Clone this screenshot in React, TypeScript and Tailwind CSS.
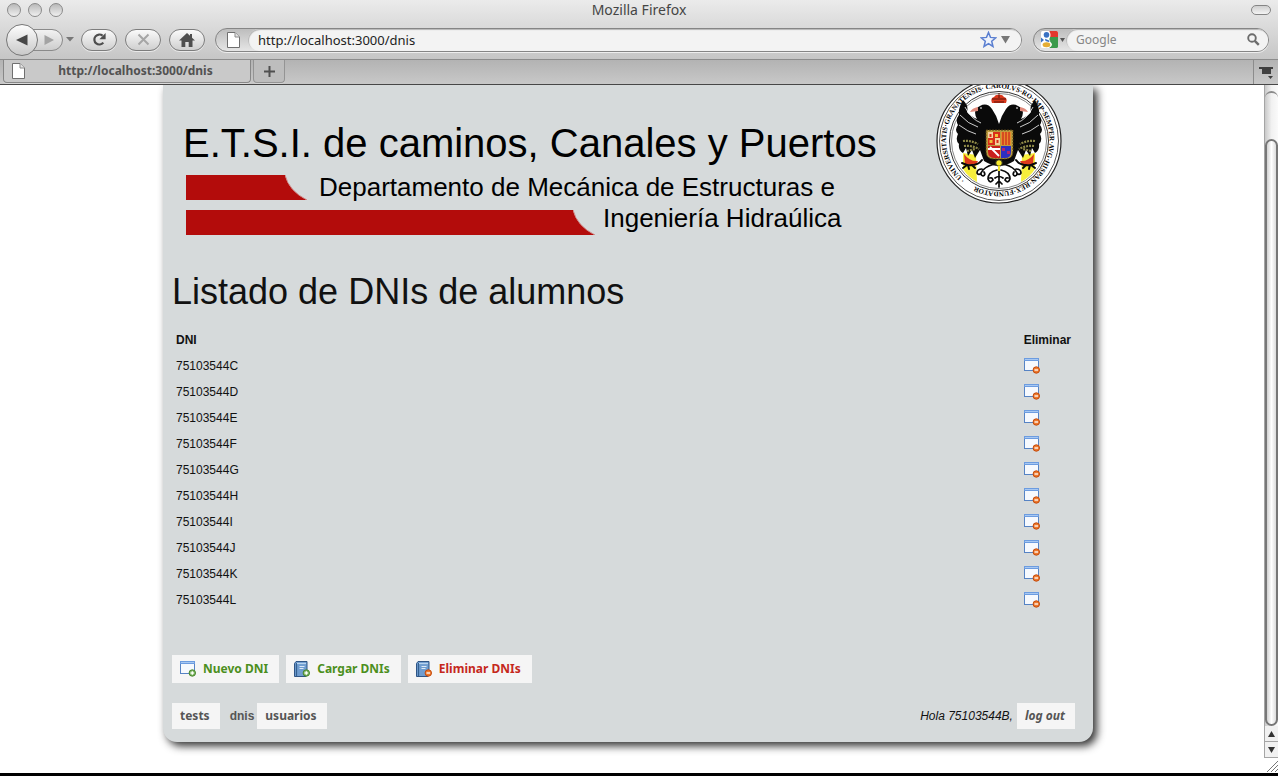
import type { ReactNode } from "react";

const DNIS = [
  "75103544C",
  "75103544D",
  "75103544E",
  "75103544F",
  "75103544G",
  "75103544H",
  "75103544I",
  "75103544J",
  "75103544K",
  "75103544L",
];

const UI_FONT = "font-['Noto_Sans','Open_Sans',sans-serif]";

function PageIcon() {
  return (
    <svg width="13" height="16" viewBox="0 0 13 16" className="shrink-0" aria-hidden="true">
      <path d="M.5.5h7.5l4.5 4.5v10.5H.5z" fill="#fff" stroke="#6f6f6f" />
      <path d="M8 .5V5h4.5" fill="#e4e4e4" stroke="#8b8b8b" />
    </svg>
  );
}

function ToolButton({ label, children }: { label: string; children: ReactNode }) {
  return (
    <button
      type="button"
      aria-label={label}
      className="flex h-[22px] w-9 items-center justify-center rounded-full border border-[#7d7d7d] bg-linear-to-b from-[#fafafa] to-[#cfcfcf] shadow-[0_1px_0_#e9e9e9]"
    >
      {children}
    </button>
  );
}

function TitleBar() {
  const light =
    "size-3.5 rounded-full border border-[#8a8a8a] bg-linear-to-b from-[#b9b9b9] to-[#f0f0f0]";
  return (
    <div className="grid h-5 grid-cols-[1fr_auto_1fr] items-center px-[7px]">
      <div className="flex gap-[7px]">
        <button type="button" aria-label="Cerrar" className={light} />
        <button type="button" aria-label="Minimizar" className={light} />
        <button type="button" aria-label="Ampliar" className={light} />
      </div>
      <h1 className="text-sm leading-5 text-[#454545]">Mozilla Firefox</h1>
      <button
        type="button"
        aria-label="Barra de herramientas"
        className="h-2.5 w-5 justify-self-end rounded-full border border-[#858585] bg-linear-to-b from-[#cfcfcf] to-[#f4f4f4]"
      />
    </div>
  );
}

function GoogleMark() {
  return (
    <svg width="17" height="17" viewBox="0 0 17 17" aria-hidden="true">
      <rect width="17" height="17" rx="1.5" fill="#fff" />
      <path d="M8.500 0H15.500q1.500 0 1.500 1.500V6H8.500z" fill="#e2382c" />
      <path d="M8.500 6H17v9.500q0 1.500-1.500 1.500H8.500z" fill="#3a9a4a" />
      <path d="M0 6.500l3 2.500-3 2.500z" fill="#3a72c4" />
      <circle cx="5.500" cy="4" r="4" fill="#fff" />
      <path d="M5 7l4.500 3L8 12 4 10z" fill="#fff" />
      <ellipse cx="5.700" cy="13.500" rx="5.200" ry="3.600" fill="#fff" />
      <ellipse cx="5.500" cy="3.800" rx="2.800" ry="2.900" fill="#3a72c4" />
      <path d="M4 7.800l4.200 1.600q.6 1-.4 1.700L4.500 10z" fill="#3a72c4" />
      <ellipse cx="5.500" cy="13.700" rx="3.900" ry="2.500" fill="#e5ad34" />
    </svg>
  );
}

function NavBar() {
  return (
    <div className="flex h-[39px] items-center pr-[9px] pl-1.5">
      <div className="flex items-center">
        <button
          type="button"
          aria-label="Atrás"
          className="z-10 flex size-8 items-center justify-center rounded-full border border-[#777] bg-linear-to-b from-[#fdfdfd] to-[#c9c9c9]"
        >
          <svg width="12" height="12" viewBox="0 0 12 12" aria-hidden="true">
            <path d="M0 6L11.500.5v11z" fill="#474747" />
          </svg>
        </button>
        <button
          type="button"
          aria-label="Adelante"
          className="-ml-2 flex h-[22px] w-[33px] items-center justify-end rounded-r-full border border-[#8a8a8a] bg-linear-to-b from-[#f2f2f2] to-[#cdcdcd] pr-2"
        >
          <svg width="10" height="10" viewBox="0 0 10 10" aria-hidden="true">
            <path d="M10 5L.5 0v10z" fill="#a3a3a3" />
          </svg>
        </button>
        <button type="button" aria-label="Historial" className="ml-[3px]">
          <svg width="8" height="5" viewBox="0 0 8 5" aria-hidden="true">
            <path d="M0 0h8L4 4.500z" fill="#777" />
          </svg>
        </button>
      </div>
      <div className="ml-[7px] flex gap-2">
        <ToolButton label="Recargar">
          <svg width="15" height="15" viewBox="0 0 15 15" aria-hidden="true">
            <path d="M11.300 10.600A5 5 0 1 1 10.600 3.700" fill="none" stroke="#4e4e4e" strokeWidth="2.200" />
            <path d="M13.600 1v6.200H7.400z" fill="#4e4e4e" />
          </svg>
        </ToolButton>
        <ToolButton label="Detener">
          <svg width="13" height="13" viewBox="0 0 13 13" aria-hidden="true">
            <path d="M1.500 1.500l10 10M11.500 1.500l-10 10" stroke="#a6a6a6" strokeWidth="2" />
          </svg>
        </ToolButton>
        <ToolButton label="Inicio">
          <svg width="16" height="14" viewBox="0 0 16 14" aria-hidden="true">
            <path d="M8 0l3 2.800V1h2v3.700l3 2.800h-2.500V14H9.700V9H6.300v5H2.500V7.500H0z" fill="#4e4e4e" />
          </svg>
        </ToolButton>
      </div>

      <div className="ml-2.5 flex h-6 flex-1 items-center rounded-full border border-[#858585] bg-linear-to-b from-[#bdbdbd] to-[#e6e6e6] shadow-[0_1px_0_#eee]">
        <span className="flex w-8 justify-end pr-2">
          <PageIcon />
        </span>
        <div className="flex h-full flex-1 items-center rounded-full bg-[#f3f3f3] pr-2.5 pl-2.5 shadow-[inset_1px_1px_1px_#b5b5b5]">
          <input
            aria-label="Dirección"
            defaultValue="http://localhost:3000/dnis"
            className="min-w-0 flex-1 bg-transparent text-[13px] leading-5 text-[#222] outline-none"
          />
          <svg width="17" height="17" viewBox="0 0 17 17" aria-label="Marcador">
            <path
              d="M8.500 1.500l2 4.900 5.300.4-4.100 3.400 1.300 5.300-4.500-2.900L4 15.500l1.300-5.300L1.200 6.800l5.300-.4z"
              fill="#eef3fc"
              stroke="#5b7fd0"
              strokeWidth="1.500"
            />
          </svg>
          <svg width="10" height="8" viewBox="0 0 10 8" className="ml-1" aria-hidden="true">
            <path d="M0 0h9L4.500 7.500z" fill="#777" />
          </svg>
        </div>
      </div>

      <div className="ml-[11px] flex h-6 w-[236px] items-center rounded-full border border-[#858585] bg-linear-to-b from-[#bdbdbd] to-[#e6e6e6] shadow-[0_1px_0_#eee]">
        <button type="button" aria-label="Buscador" className="flex w-8 items-center gap-0.5 pl-[7px]">
          <GoogleMark />
          <svg width="5" height="4" viewBox="0 0 5 4" aria-hidden="true">
            <path d="M0 0h5L2.500 4z" fill="#555" />
          </svg>
        </button>
        <div className="flex h-full min-w-0 flex-1 items-center rounded-full bg-[#f3f3f3] pr-2 pl-2.5 shadow-[inset_1px_1px_1px_#b5b5b5]">
          <input
            aria-label="Buscar"
            placeholder="Google"
            className="min-w-0 flex-1 bg-transparent text-xs leading-5 outline-none placeholder:text-[#868686]"
          />
          <svg width="13" height="13" viewBox="0 0 13 13" aria-hidden="true">
            <circle cx="5" cy="5" r="3.800" fill="none" stroke="#6c6c6c" strokeWidth="1.900" />
            <path d="M7.800 7.800l4 4" stroke="#6c6c6c" strokeWidth="2.400" />
          </svg>
        </div>
      </div>
    </div>
  );
}

function TabStrip() {
  return (
    <div className="flex h-[26px] items-start border-t border-b border-t-[#8c8c8c] border-b-[#474747] bg-linear-to-b from-[#b3b3b3] to-[#c8c8c8] pl-[3px]">
      <div className="flex h-[23px] w-[248px] items-center rounded-b-[4px] border border-t-0 border-[#878787] bg-[#c9c9c9] px-2 shadow-[0_1px_0_#d9d9d9]">
        <PageIcon />
        <button type="button" className="flex-1 pl-1 text-center text-xs leading-5 font-bold text-[#525252]">
          http://localhost:3000/dnis
        </button>
      </div>
      <button
        type="button"
        aria-label="Nueva pestaña"
        className="ml-0.5 flex h-[23px] w-8 items-center justify-center rounded-b-[4px] border border-t-0 border-[#949494] bg-[#bdbdbd] shadow-[0_1px_0_#d4d4d4]"
      >
        <svg width="11" height="11" viewBox="0 0 11 11" aria-hidden="true">
          <path d="M5.500 0v11M0 5.500h11" stroke="#505050" strokeWidth="2" />
        </svg>
      </button>
      <button
        type="button"
        aria-label="Lista de pestañas"
        className="ml-auto flex h-full w-[25px] items-center justify-center border-l border-[#8c8c8c]"
      >
        <svg width="15" height="13" viewBox="0 0 15 13" aria-hidden="true">
          <path d="M0 1h14v2h-2v5H3V3H0z" fill="#404040" />
          <path d="M9 10h5l-2.500 3z" fill="#404040" />
        </svg>
      </button>
    </div>
  );
}

function Crest() {
  const wing =
    "M27 22 Q33 28 31 34 Q34 38 41 41 Q36 32 44 28 Q51 24 56 31 Q61 38 63 46 Q65 38 70 31 Q75 24 82 28 Q90 32 85 41 Q92 38 95 34 Q93 28 99 22 Q104 30 103 37 Q107 42 104 47 Q108 52 104 56 Q107 62 103 66 Q104 72 99 75 L96 70 L94 78 L90 72 L87 80 L82 72 L78 83 Q70 88 63 88 Q56 88 48 83 L44 72 L39 80 L36 72 L32 78 L30 70 L27 75 Q22 72 23 66 Q19 62 22 56 Q18 52 22 47 Q19 42 23 37 Q22 30 27 22z";
  return (
    <svg
      width="126"
      height="119"
      viewBox="0 7 126 119"
      className="shrink-0"
      role="img"
      aria-label="Escudo de la Universidad de Granada"
    >
      <circle cx="63" cy="63" r="62" fill="#fff" stroke="#222" strokeWidth="1.200" />
      <circle cx="63" cy="63" r="59.500" fill="none" stroke="#555" strokeWidth="1" />
      <circle cx="63" cy="63" r="49.500" fill="none" stroke="#333" strokeWidth="1" />
      <circle cx="63" cy="63" r="47.500" fill="#fff" stroke="#666" strokeWidth=".8" />
      <path id="motto" d="M29 102A51.800 51.800 0 1 1 30 102.800" fill="none" />
      <text className="font-['Liberation_Serif',serif] text-[7px] font-bold" fill="#000">
        <textPath href="#motto">
          · UNIVERSITATIS·GRANATENSIS· CAROLVS·RO·IMP·SEMPER·AVG·HISPAN·REX·FUNDATOR
        </textPath>
      </text>

      <path d="M27 75L40 77 41 104Q32 99 27 91z" fill="#f6ee3c" />
      <path d="M99 75L86 77 85 104Q94 99 99 91z" fill="#f6ee3c" />
      <path d="M28 76Q34 84 42 83L39 88 29 86zM98 76Q92 84 84 83L87 88 97 86z" fill="#dc3a1c" />

      <path d={wing} fill="#0a0a0a" />
      <path d="M42 29Q36 30 34 34L42 33zM84 29Q90 30 92 34L84 33z" fill="#e08a7c" />
      <path d="M44 30h2M80 30h2" stroke="#fff" strokeWidth="1" />
      <g fill="none" stroke="#fff" strokeWidth=".8">
        <path d="M24 37Q32 46 42 49M23 47Q32 54 40 56" />
        <path d="M102 37Q94 46 84 49M103 47Q94 54 86 56" />
        <path d="M29 29Q35 41 45 45M97 29Q91 41 81 45" />
      </g>
      <g fill="none" stroke="#8f8a48" strokeWidth="2.200" strokeDasharray="2 1">
        <path d="M27 63Q34 62 42 66M28 68Q35 67 43 71M31 73l8-2" />
        <path d="M99 63Q92 62 84 66M98 68Q91 67 83 71M95 73l-8-2" />
      </g>

      <path d="M56 25Q54 20 58 19 60 16 63 17 66 16 68 19 72 20 70 25z" fill="#d8371c" />
      <path d="M56 21h14M58 24h10M63 15v5" stroke="#5e1509" strokeWidth="1" />

      <g fill="none" stroke="#0a0a0a" strokeLinecap="round">
        <path
          d="M46 82Q42 88 31 87M31 87l-5-2M31 87l-4 3M32 87l1 4M36 87l3 3M80 82Q84 88 95 87M95 87l5-2M95 87l4 3M94 87l-1 4M90 87l-3 3"
          strokeWidth="2"
        />
        <path
          d="M63 84V109M60 86Q52 87 47 92 43 97 47 98 50 97 48 94M66 86Q74 87 79 92 83 97 79 98 76 97 78 94M61 92Q52 94 52 101 54 106 57 102 56 99 54 100M65 92Q74 94 74 101 72 106 69 102 70 99 72 100M46 91Q41 91 41 95 43 98 45 95M80 91Q85 91 85 95 83 98 81 95M59 100q4-3 8 0M60 106l3-3 3 3"
          strokeWidth="1.700"
        />
      </g>
      <circle cx="63" cy="85" r="3.300" fill="#f6e92c" stroke="#222" />
      <path d="M62 88h2v5h-2z" fill="#f6e92c" />

      <path d="M50 52h27v21q0 8-8 8H58q-8 0-8-8z" fill="#b99b3e" stroke="#4c3b14" strokeDasharray="2 1" />
      <path d="M52 54h12v13H52z" fill="#d92c1a" />
      <path d="M52 54h5v6h-5zM59 60h5v7h-5z" fill="#f3cf9c" />
      <path d="M53.500 56h2v3h-2zM60.500 62h2v3h-2z" fill="#d92c1a" />
      <path d="M59 56h3v3h-3zM53.500 62h3v3h-3z" fill="#f0c13a" />
      <path d="M65 54h10v13H65z" fill="#e88a2c" />
      <path d="M67 54v13M70 54v13M73 54v13" stroke="#c9261b" strokeWidth="1.200" />
      <path d="M52 68h12v12h-5q-7 0-7-6z" fill="#c9201c" />
      <path d="M52 71h12M54 69l9 9" stroke="#fff" strokeWidth="1.800" />
      <path d="M65 68h10v6q0 6-6 6h-4z" fill="#2c2fc0" />
      <path d="M66 70h3v3h-3zM71 73h3v3h-3z" fill="#b0246c" />
    </svg>
  );
}

function RedBar({ wide = false }: { wide?: boolean }) {
  return (
    <div className={wide ? "flex h-[25px] w-[409px]" : "flex h-[25px] w-[121px]"}>
      <div className="flex-1 bg-[#b30c0b]" />
      <svg width="22" height="25" viewBox="0 0 22 25" aria-hidden="true">
        <path d="M0 0Q4 16 22 25H0z" fill="#b30c0b" />
        <path d="M0 0Q4 16 22 25" fill="none" stroke="#cf8d8b" strokeWidth="1" />
      </svg>
    </div>
  );
}

function Badge({ remove = false }: { remove?: boolean }) {
  return (
    <>
      <circle
        cx="12.300"
        cy="12"
        r="3.200"
        fill={remove ? "#ee7a2e" : "#7cb560"}
        stroke={remove ? "#c2490c" : "#48862e"}
      />
      <path d="M10.500 12h3.600" stroke="#fff" strokeWidth="1.300" />
      {!remove && <path d="M12.300 10.200v3.600" stroke="#fff" strokeWidth="1.300" />}
    </>
  );
}

function WindowIcon({ remove = false }: { remove?: boolean }) {
  return (
    <svg width="16" height="16" viewBox="0 0 16 16" aria-hidden="true">
      <rect x=".5" y=".5" width="14" height="12" fill="#f6f9fe" stroke="#5683c4" />
      <path d="M0 0h15v3H0z" fill="#6c9ce0" />
      <path d="M1 1.500h13" stroke="#a8c8f2" />
      <Badge remove={remove} />
    </svg>
  );
}

function BookIcon({ remove = false }: { remove?: boolean }) {
  return (
    <svg width="16" height="16" viewBox="0 0 16 16" aria-hidden="true">
      <path d="M.5 2.500l1.500-2h11v12l-1 3H.5z" fill="#6f9dd0" stroke="#2f5585" />
      <path d="M2.500 2v13" stroke="#34608f" strokeWidth="1.200" />
      <path d="M3 2.500h9" stroke="#b8d3ee" strokeWidth="1.200" />
      <path d="M5.500 5.500h5M5.500 7.500h4" stroke="#dce9f7" />
      <Badge remove={remove} />
    </svg>
  );
}

function ActionButton({ icon, danger = false, children }: { icon: ReactNode; danger?: boolean; children: ReactNode }) {
  return (
    <button
      type="button"
      className={`${UI_FONT} ${danger ? "text-[#c5281c]" : "text-[#4c8f1d]"} flex h-7 items-center gap-[7px] bg-[#f5f5f5] pr-[11px] pl-2 text-xs font-bold`}
    >
      {icon}
      {children}
    </button>
  );
}

function NavLink({ children }: { children: ReactNode }) {
  return (
    <a href="#" className={`${UI_FONT} h-[26px] bg-[#f5f5f5] pr-2.5 pl-2 leading-[26px] font-bold text-[#555]`}>
      {children}
    </a>
  );
}

function Panel() {
  return (
    <div className="mx-auto w-full max-w-[930px] rounded-b-[14px] bg-[#d6dadb] pb-[13px] font-['Liberation_Sans',sans-serif] text-xs text-[#111] shadow-[4px_4px_8px_#333]">
      <header className="flex items-start justify-between pr-[31px] pl-5 text-black">
        <div className="pt-9">
          <p className="text-[40px] leading-[44px] whitespace-nowrap">E.T.S.I. de caminos, Canales y Puertos</p>
          <div className="flex flex-col gap-2.5 pt-2.5 pl-[3px] text-[26px] whitespace-nowrap">
            <div className="flex items-start gap-3">
              <RedBar />
              <p className="leading-[25px]">Departamento de Mecánica de Estructuras e</p>
            </div>
            <div className="flex items-start gap-2">
              <RedBar wide />
              <p className="leading-4">Ingeniería Hidraúlica</p>
            </div>
          </div>
        </div>
        <Crest />
      </header>

      <main className="pt-[35px] pr-[18px] pl-[9px]">
        <h2 className="text-4xl leading-[44px]">Listado de DNIs de alumnos</h2>
        <table className="mt-[13px] w-full border-collapse text-left">
          <thead>
            <tr className="h-[26px]">
              <th scope="col" className="px-1 font-bold">DNI</th>
              <th scope="col" className="w-[54px] px-1 font-bold">Eliminar</th>
            </tr>
          </thead>
          <tbody>
            {DNIS.map((dni) => (
              <tr key={dni} className="h-[26px]">
                <td className="px-1">{dni}</td>
                <td className="px-1">
                  <button type="button" aria-label={`Eliminar ${dni}`} className="block">
                    <WindowIcon remove />
                  </button>
                </td>
              </tr>
            ))}
          </tbody>
        </table>
        <div className="mt-[42px] flex gap-[7px]">
          <ActionButton icon={<WindowIcon />}>Nuevo DNI</ActionButton>
          <ActionButton icon={<BookIcon />}>Cargar DNIs</ActionButton>
          <ActionButton icon={<BookIcon remove />} danger>
            Eliminar DNIs
          </ActionButton>
        </div>
      </main>

      <footer className="flex items-center justify-between pt-5 pr-[18px] pl-[9px]">
        <nav className="flex items-center">
          <NavLink>tests</NavLink>
          <span className="pr-[3px] pl-2.5 font-bold text-[#555]">dnis</span>
          <NavLink>usuarios</NavLink>
        </nav>
        <p className="flex items-center gap-1 italic">
          Hola 75103544B,
          <NavLink>log out</NavLink>
        </p>
      </footer>
    </div>
  );
}

function ScrollBar() {
  return (
    <div className="flex w-3.5 shrink-0 flex-col" aria-hidden="true">
      <div className="flex flex-1 flex-col border-l border-[#a5a5a5] bg-linear-to-r from-[#c9c9c9] via-[#f1f1f1] to-[#fafafa] pt-1.5">
        <div className="h-12 rounded-t-full border-t-2 border-[#8b8b8b]" />
        <div className="flex-1 rounded-full border-2 border-[#777] bg-linear-to-r from-[#d2d2d2] via-white to-[#dcdcdc]" />
      </div>
      <div className="flex h-4 items-center justify-center border-b border-l border-[#a5a5a5] bg-[#f1f1f1]">
        <svg width="7" height="6" viewBox="0 0 7 6">
          <path d="M3.500 0L7 6H0z" fill="#333" />
        </svg>
      </div>
      <div className="flex h-4 items-center justify-center border-b border-l border-[#a5a5a5] bg-[#f1f1f1]">
        <svg width="7" height="6" viewBox="0 0 7 6">
          <path d="M3.500 6L7 0H0z" fill="#333" />
        </svg>
      </div>
      <svg width="14" height="15" viewBox="0 0 14 15">
        <path d="M3 14L14 3M7 14l7-7M11 14l3-3" stroke="#777" />
      </svg>
    </div>
  );
}

export default function App() {
  return (
    <div className="flex min-h-screen flex-col border-b-[3px] border-black bg-white">
      <div className={UI_FONT}>
        <div className="bg-linear-to-b from-[#ebebeb] to-[#c6c6c6]">
          <TitleBar />
          <NavBar />
        </div>
        <TabStrip />
      </div>
      <div className="flex flex-1">
        <div className="min-w-0 flex-1 overflow-hidden pr-2 pb-6">
          <Panel />
        </div>
        <ScrollBar />
      </div>
    </div>
  );
}
